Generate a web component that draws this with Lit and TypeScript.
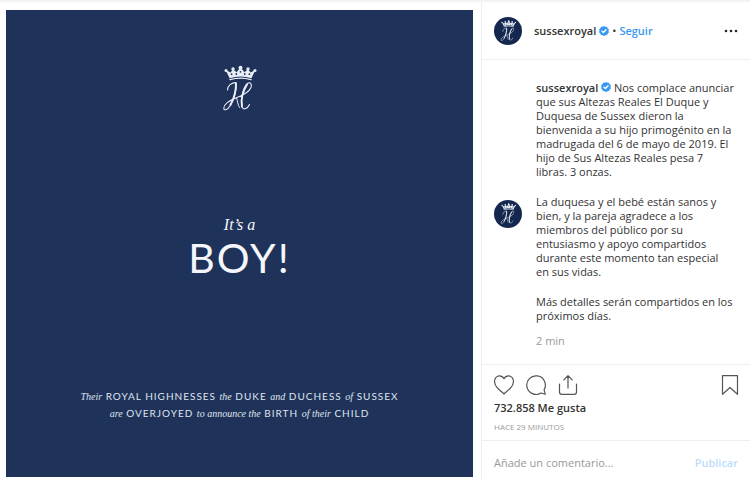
import { LitElement, html, css } from "lit";
import { customElement } from "lit/decorators.js";

@customElement("royal-monogram")
class RoyalMonogram extends LitElement {
  static styles = css`
    :host { display: block; }
    .mark { display: block; width: 100%; height: 100%; }
    .line { fill: none; stroke: #e9eef6; stroke-linecap: round; stroke-linejoin: round; }
    .fill { fill: #e9eef6; }
    .gem { fill: #1f3259; }
  `;
  render() {
    return html`<svg class="mark" viewBox="0 0 36 48" aria-hidden="true">
      <path class="line" stroke-width="1.4" d="M8 14.6Q18.500 11.600 29 14.600"/>
      <path class="fill" d="M7.600 13.200L3.600 5L8.500 7.500L11 4.200L14.500 7.200L18.500 2.600L22.500 7.200L26 4.200L28.500 7.500L33.400 5L29.400 13.200Q18.500 9.800 7.600 13.200Z"/>
      <circle class="fill" cx="4" cy="5.400" r="1.500"/>
      <circle class="fill" cx="11" cy="3.900" r="1.700"/>
      <circle class="fill" cx="18.500" cy="2.800" r="2"/>
      <circle class="fill" cx="26" cy="3.900" r="1.700"/>
      <circle class="fill" cx="33" cy="5.400" r="1.500"/>
      <circle class="gem" cx="9.600" cy="9.200" r=".9"/>
      <circle class="gem" cx="14.300" cy="9" r=".9"/>
      <circle class="gem" cx="18.500" cy="6.800" r=".9"/>
      <circle class="gem" cx="22.700" cy="9" r=".9"/>
      <circle class="gem" cx="27.400" cy="9.200" r=".9"/>
      <path class="line" stroke-width="1.100" d="M5.500 25C5.500 20.500 9.500 17.600 14 17.600C15 24 12 35 8 41C5.500 45 1.800 46 1.800 43.200C1.800 39 8.500 35 15 32.500C21 30.200 27 27 29 22.500C30.300 19 28 16.600 25.500 18.500C21 22.500 18.500 34 19.800 41C20.500 45.500 25 44.500 27.500 39.500"/>
      <path class="line" stroke-width="1.900" d="M14 18.500C14 26 11.800 34 8.400 40M25 19.500C21 26 18.800 35 20 41.500"/>
      <path class="line" stroke-width="1" d="M14.500 33C16 36 15.500 40 17.500 42.500"/>
    </svg>`;
  }
}

@customElement("verified-badge")
class VerifiedBadge extends LitElement {
  static styles = css`
    :host { display: inline-block; width: 10px; height: 10px; }
    .badge { display: block; width: 10px; height: 10px; }
    .seal { fill: #3897f0; }
    .tick { fill: none; stroke: #fff; stroke-width: 1.4; stroke-linecap: round; stroke-linejoin: round; }
  `;
  render() {
    return html`<svg class="badge" viewBox="0 0 10 10" role="img" aria-label="Verificado">
      <path class="seal" d="M5 0L6.300 .7L7.900 .8L8.600 2.200L9.900 3.200L9.500 4.800L9.900 6.400L8.700 7.500L8.100 9L6.500 9.200L5 10L3.500 9.200L1.900 9L1.300 7.500L.1 6.400L.5 4.800L.1 3.200L1.400 2.200L2.100 .8L3.700 .7Z"/>
      <path class="tick" d="M3 5.200L4.400 6.500L7 3.700"/>
    </svg>`;
  }
}

@customElement("app-root")
class AppRoot extends LitElement {
  static styles = css`
    :host {
      display: block;
      font-family: "Open Sans", "Noto Sans", sans-serif;
      font-size: 11px;
      line-height: 14px;
      color: #333;
      background: #fff;
    }
    * { box-sizing: border-box; }
    p { margin: 0; }
    a { color: inherit; text-decoration: none; }
    button { display: block; margin: 0; padding: 0; border: 0; background: none; font: inherit; color: inherit; cursor: pointer; }
    .post {
      display: grid;
      grid-template-columns: minmax(0, 1fr) 269px;
      column-gap: 8px;
      min-height: 100vh;
      margin: 0;
      padding-left: 6px;
      border-top: 2px solid #f3f3f3;
    }
    .art {
      display: flex;
      flex-direction: column;
      align-items: center;
      aspect-ratio: 1;
      align-self: start;
      margin-top: 8px;
      padding-top: 55px;
      background: #1f3259;
      color: #f4f6fa;
      text-align: center;
    }
    .crest { width: 36px; height: 48px; }
    .serif { font-family: "Liberation Serif", serif; font-style: italic; }
    .intro { margin-top: 103px; font-size: 16px; line-height: 18px; }
    .title {
      margin: 0;
      font-family: Lato, sans-serif;
      font-weight: 400;
      font-size: 41px;
      line-height: 48px;
      letter-spacing: 2px;
    }
    .announce {
      margin-top: 106px;
      font-family: Lato, sans-serif;
      font-size: 10px;
      line-height: 17px;
      letter-spacing: 1px;
      color: #dfe5ef;
    }
    .announce .serif { letter-spacing: 0; line-height: 12px; }
    .side { display: flex; flex-direction: column; border-left: 1px solid #efefef; }
    .head {
      display: flex;
      align-items: center;
      height: 58px;
      padding: 0 12px;
      border-bottom: 1px solid #efefef;
    }
    .avatar {
      display: grid;
      place-items: center;
      flex: none;
      width: 28px;
      height: 28px;
      border-radius: 50%;
      background: #14284f;
    }
    .avatar-mark { width: 17px; height: 22px; }
    .names { display: flex; align-items: center; gap: 3px; margin-left: 12px; flex: 1; }
    .user { font-weight: 600; }
    .follow { font-weight: 600; color: #3897f0; }
    .more, .icon { display: block; }
    .comments {
      flex: 1;
      display: flex;
      align-items: center;
      gap: 14px;
      padding: 20px 14px 16px 12px;
    }
    .text { display: flex; flex-direction: column; gap: 16px; }
    .when { margin-top: -5px; color: #999; }
    .actions { padding: 9px 11px 6px; border-top: 1px solid #efefef; }
    .icons { display: flex; gap: 10px; margin-bottom: 5px; }
    .save { margin-left: auto; }
    .icon { fill: none; stroke: #555; stroke-width: 1.2; stroke-linejoin: round; stroke-linecap: round; }
    .likes { font-weight: 600; padding-left: 1px; }
    .ago { margin-top: 5px; padding-left: 1px; font-size: 8px; color: #999; }
    .form {
      display: flex;
      align-items: center;
      height: 39px;
      padding: 6px 12px 0;
      border-top: 1px solid #efefef;
    }
    .field {
      flex: 1;
      min-width: 0;
      padding: 0;
      border: 0;
      outline: 0;
      background: none;
      font: inherit;
      color: #262626;
    }
    .field::placeholder { color: #999; opacity: 1; }
    .send { font-weight: 600; color: #bddcfa; }
  `;

  render() {
    const avatar = html`<a class="avatar" href="#" aria-label="sussexroyal"><royal-monogram class="avatar-mark"></royal-monogram></a>`;
    return html`<article class="post">
      <section class="art">
        <royal-monogram class="crest"></royal-monogram>
        <p class="intro serif">It’s a</p>
        <h1 class="title">BOY!</h1>
        <p class="announce">
          <span class="serif">Their</span> ROYAL HIGHNESSES <span class="serif">the</span> DUKE <span class="serif">and</span> DUCHESS <span class="serif">of</span> SUSSEX<br />
          <span class="serif">are</span> OVERJOYED <span class="serif">to announce the</span> BIRTH <span class="serif">of their</span> CHILD
        </p>
      </section>
      <section class="side">
        <header class="head">
          ${avatar}
          <div class="names">
            <a class="user" href="#">sussexroyal</a>
            <verified-badge></verified-badge>
            <span>•</span>
            <button class="follow">Seguir</button>
          </div>
          <button aria-label="Más opciones">
            <svg class="more" width="14" height="4" viewBox="0 0 14 4" fill="#262626"><circle cx="2" cy="2" r="1.300"/><circle cx="7" cy="2" r="1.300"/><circle cx="12" cy="2" r="1.300"/></svg>
          </button>
        </header>
        <div class="comments">
          ${avatar}
          <div class="text">
            <p><a class="user" href="#">sussexroyal</a> <verified-badge></verified-badge> Nos complace anunciar que sus Altezas Reales El Duque y Duquesa de Sussex dieron la bienvenida a su hijo primogénito en la madrugada del 6 de mayo de 2019. El hijo de Sus Altezas Reales pesa 7 libras. 3 onzas.</p>
            <p>La duquesa y el bebé están sanos y bien, y la pareja agradece a los miembros del público por su entusiasmo y apoyo compartidos durante este momento tan especial en&nbsp;sus vidas.</p>
            <p>Más detalles serán compartidos en los próximos días.</p>
            <p class="when">2 min</p>
          </div>
        </div>
        <div class="actions">
          <div class="icons">
            <button aria-label="Me gusta"><svg class="icon" width="22" height="22" viewBox="0 0 22 22"><path d="M11 20C9.500 18.500 7 16.500 4.500 14C2.300 11.800 1.500 10 1.500 7.600C1.500 4.200 3.800 1.800 6.500 1.800C8.600 1.800 10 2.800 11 4.700C12 2.800 13.400 1.800 15.500 1.800C18.200 1.800 20.500 4.200 20.500 7.600C20.500 10 19.700 11.800 17.500 14C15 16.500 12.500 18.500 11 20Z"/></svg></button>
            <button aria-label="Comentar"><svg class="icon" width="22" height="22" viewBox="0 0 22 22"><path d="M20.300 20.300L19.100 15.800A9.300 9.300 0 1 0 16 19Z"/></svg></button>
            <button aria-label="Compartir"><svg class="icon" width="22" height="22" viewBox="0 0 22 22"><path d="M2.500 10V18Q2.500 20.300 4.800 20.300H17.200Q19.500 20.300 19.500 18V10M11 14V1.700M6.800 5.900L11 1.700L15.200 5.900"/></svg></button>
            <button class="save" aria-label="Guardar"><svg class="icon" width="18" height="22" viewBox="0 0 18 22"><path d="M1.500 1.700H16.500V20.300L9 13.500L1.500 20.300Z"/></svg></button>
          </div>
          <p class="likes">732.858 Me gusta</p>
          <p class="ago">HACE 29 MINUTOS</p>
        </div>
        <form class="form">
          <input class="field" aria-label="Añade un comentario" placeholder="Añade un comentario..." />
          <button class="send" type="button">Publicar</button>
        </form>
      </section>
    </article>`;
  }
}
